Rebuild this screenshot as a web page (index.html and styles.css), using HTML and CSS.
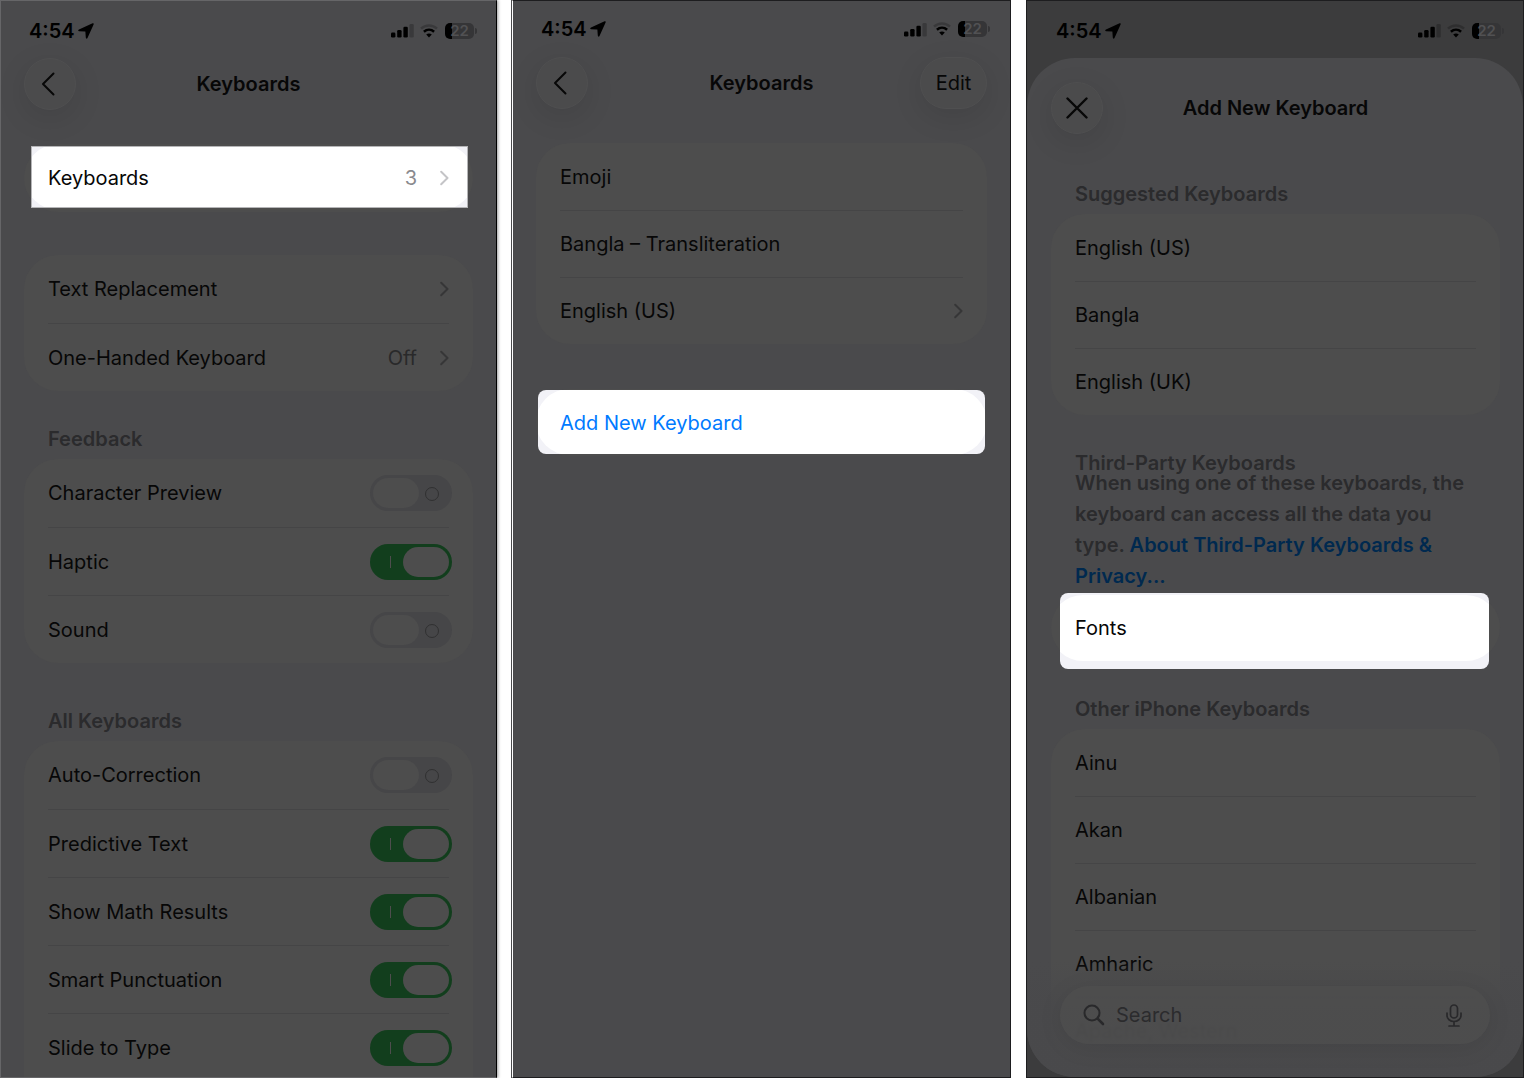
FILE: index.html
```html
<!DOCTYPE html>
<html lang="en">
<head>
  <meta charset="UTF-8" />
  <meta name="viewport" content="width=device-width, initial-scale=1" />
  <title>Keyboards</title>
  <link rel="stylesheet" href="styles.css">
</head>
<body>
  <!-- Shared icons -->
  <svg class="sprite" aria-hidden="true">
    <symbol id="arrow" viewBox="0 0 16 16">
      <path d="M14.600.3 1 6.500C-.2 7.100 0 8.100 1.200 8.200L7 8.600c.3 0 .4.1.4.4l.4 5.600c.1 1.300 1.200 1.400 1.700.3L15.600 1.400C16 .4 15.500-.1 14.600.3z" fill="currentColor"/>
    </symbol>
    <symbol id="signal" viewBox="0 0 23 15">
      <rect x="0" y="9.500" width="4.400" height="5" rx="1.300"/>
      <rect x="6.200" y="7" width="4.400" height="7.500" rx="1.300"/>
      <rect x="12.400" y="3.800" width="4.400" height="10.700" rx="1.300"/>
      <rect x="18.400" y="1" width="4.400" height="13.500" rx="1.300" fill-opacity=".22"/>
    </symbol>
    <symbol id="wifi" viewBox="0 0 18 14">
      <path d="M1 4.600C5.500.4 12.500.4 17 4.600" fill="none" stroke="currentColor" stroke-width="2.600" stroke-opacity=".22"/>
      <path d="M3.900 7.700C6.900 5 11.100 5 14.100 7.700" fill="none" stroke="currentColor" stroke-width="2.500"/>
      <path d="M6.200 10.500C7.900 9 10.100 9 11.800 10.500L9 13.400z" fill="currentColor"/>
    </symbol>
    <symbol id="back" viewBox="0 0 14 24">
      <path d="M12.500 1.500 2 12l10.500 10.500" fill="none" stroke="currentColor" stroke-width="2" stroke-linecap="round" stroke-linejoin="round"/>
    </symbol>
    <symbol id="chevron" viewBox="0 0 9 16">
      <path d="M1.200 1.800 7.500 8 1.200 14.200" fill="none" stroke="currentColor" stroke-width="2" stroke-linecap="round" stroke-linejoin="round"/>
    </symbol>
  </svg>

  <main class="screens">
    <!-- Keyboard settings -->
    <section class="phone phone-settings">
      <div class="status">
        <span class="time">4:54</span>
        <svg class="arrow"><use href="#arrow"/></svg>
        <svg class="signal"><use href="#signal"/></svg>
        <svg class="wifi"><use href="#wifi"/></svg>
        <span class="battery">22</span>
      </div>
      <header class="nav">
        <button class="round-btn" aria-label="Back"><svg class="back"><use href="#back"/></svg></button>
        <h1>Keyboards</h1>
      </header>

      <ul class="card first">
        <li class="spot spot-line">
          <a href="#">Keyboards <span class="value">3</span><svg class="chevron"><use href="#chevron"/></svg></a>
        </li>
      </ul>

      <ul class="card">
        <li><a href="#">Text Replacement <svg class="chevron"><use href="#chevron"/></svg></a></li>
        <li><a href="#">One-Handed Keyboard <span class="value">Off</span><svg class="chevron"><use href="#chevron"/></svg></a></li>
      </ul>

      <h2>Feedback</h2>
      <ul class="card">
        <li><label>Character Preview <input type="checkbox" class="toggle"></label></li>
        <li><label>Haptic <input type="checkbox" class="toggle" checked></label></li>
        <li><label>Sound <input type="checkbox" class="toggle"></label></li>
      </ul>

      <h2 class="far">All Keyboards</h2>
      <ul class="card">
        <li><label>Auto-Correction <input type="checkbox" class="toggle"></label></li>
        <li><label>Predictive Text <input type="checkbox" class="toggle" checked></label></li>
        <li><label>Show Math Results <input type="checkbox" class="toggle" checked></label></li>
        <li><label>Smart Punctuation <input type="checkbox" class="toggle" checked></label></li>
        <li class="last"><label>Slide to Type <input type="checkbox" class="toggle" checked></label></li>
      </ul>
    </section>

    <!-- Installed keyboards -->
    <section class="phone phone-list">
      <div class="status">
        <span class="time">4:54</span>
        <svg class="arrow"><use href="#arrow"/></svg>
        <svg class="signal"><use href="#signal"/></svg>
        <svg class="wifi"><use href="#wifi"/></svg>
        <span class="battery">22</span>
      </div>
      <header class="nav">
        <button class="round-btn" aria-label="Back"><svg class="back"><use href="#back"/></svg></button>
        <h1>Keyboards</h1>
        <button class="round-btn edit-btn">Edit</button>
      </header>

      <ul class="card first">
        <li>Emoji</li>
        <li>Bangla – Transliteration</li>
        <li><a href="#">English (US) <svg class="chevron"><use href="#chevron"/></svg></a></li>
      </ul>

      <ul class="card">
        <li class="spot spot-add"><button>Add New Keyboard</button></li>
      </ul>
    </section>

    <!-- Add new keyboard sheet -->
    <section class="phone phone-add">
      <div class="status">
        <span class="time">4:54</span>
        <svg class="arrow"><use href="#arrow"/></svg>
        <svg class="signal"><use href="#signal"/></svg>
        <svg class="wifi"><use href="#wifi"/></svg>
        <span class="battery">22</span>
      </div>
      <div class="sheet">
        <header class="nav">
          <button class="round-btn" aria-label="Close">
            <svg class="close" viewBox="0 0 22 22"><path d="M1.500 1.500l19 19M20.500 1.500l-19 19" fill="none" stroke="currentColor" stroke-width="2.400" stroke-linecap="round"/></svg>
          </button>
          <h1>Add New Keyboard</h1>
        </header>

        <h2 class="far">Suggested Keyboards</h2>
        <ul class="card">
          <li><button>English (US)</button></li>
          <li><button>Bangla</button></li>
          <li><button>English (UK)</button></li>
        </ul>

        <h2 class="tight">Third-Party Keyboards</h2>
        <p class="note">When using one of these keyboards, the keyboard can access all the data you type. <a href="#">About Third-Party Keyboards &amp; Privacy...</a></p>
        <ul class="card">
          <li class="spot spot-fonts"><button>Fonts</button></li>
        </ul>

        <h2>Other iPhone Keyboards</h2>
        <ul class="card">
          <li><button>Ainu</button></li>
          <li><button>Akan</button></li>
          <li><button>Albanian</button></li>
          <li><button>Amharic</button></li>
          <li class="under"><button>Apache, Western</button></li>
        </ul>

        <div class="fade">
          <label class="search">
            <svg class="glass" viewBox="0 0 22 22"><circle cx="9" cy="9" r="7.500" fill="none" stroke="currentColor" stroke-width="2"/><path d="M14.600 14.600l5.400 5.400" stroke="currentColor" stroke-width="2.600" stroke-linecap="round"/></svg>
            <input type="text" placeholder="Search" aria-label="Search">
            <svg class="mic" viewBox="0 0 16 23"><rect x="4.500" y="1" width="7" height="13" rx="3.500" fill="none" stroke="currentColor" stroke-width="1.700"/><path d="M1 9v2.500a7 6 0 0 0 14 0V9M8 17.500V22M3 22h10" fill="none" stroke="currentColor" stroke-width="1.700" stroke-linecap="round"/></svg>
          </label>
        </div>
      </div>
    </section>
  </main>
</body>
</html>
```

FILE: styles.css
```css
* {
  box-sizing: border-box;
}
body {
  font-family: Inter, "Liberation Sans", sans-serif;
  font-size: 20px;
  line-height: 24px;
  color: #070707;
  background: white;
  margin: 0;
}
h1, h2, p, ul {
  margin: 0;
  padding: 0;
}
a {
  color: inherit;
  text-decoration: none;
}
button, input {
  font: inherit;
  color: inherit;
  background: none;
  border: none;
  padding: 0;
  cursor: pointer;
}
svg {
  flex: none;
}
.sprite {
  display: none;
}
.screens {
  display: grid;
  grid-template-columns: 497fr 499fr 498fr;
  gap: 15px;
  height: 100vh;
}
.phone {
  background: #4a4a4c;
  border: 1px solid #1d1d1f;
  padding: 0 23px;
  min-width: 0;
  overflow: hidden;
}
.phone-settings {
  border-color: #666668 black #666668 #666668;
  box-shadow: 1px 0 3px rgba(0, 0, 0, 0.4);
}
.phone-list {
  border-left-color: white;
  box-shadow: -1px 0 0 #4a4a4c;
}
.phone-add {
  background: #3c3c3d;
  padding: 0;
}

/* Status bar */
.status {
  display: flex;
  align-items: center;
  height: 57px;
  padding: 2px 0 0 5px;
  color: black;
}
.phone-settings .status {
  margin-right: -1px;
}
.phone-list .status {
  height: 56px;
  padding-bottom: 2px;
}
.phone-add .status {
  padding-left: 29px;
  padding-right: 22px;
}
.time {
  font-weight: 600;
}
.arrow {
  width: 16px;
  height: 16px;
  margin-left: 3px;
}
.signal {
  width: 23px;
  height: 15px;
  margin-left: auto;
}
.wifi {
  width: 18px;
  height: 14px;
  margin: 0 7px 0 6px;
}
.battery {
  position: relative;
  width: 29px;
  height: 16px;
  border-radius: 5px;
  background: linear-gradient(to right, black 7px, #353537 7px);
  color: #515153;
  font-size: 15px;
  font-weight: 600;
  line-height: 16px;
  text-align: center;
}
.battery::after {
  content: "";
  position: absolute;
  right: -3px;
  top: 5px;
  width: 2px;
  height: 6px;
  border-radius: 0 2px 2px 0;
  background: #353537;
}

/* Navigation */
.nav {
  display: grid;
  grid-template-columns: 1fr auto 1fr;
  align-items: center;
}
h1 {
  grid-column: 2;
  font-size: 20px;
  font-weight: 600;
}
.round-btn {
  display: flex;
  align-items: center;
  justify-content: center;
  width: 52px;
  height: 52px;
  border-radius: 26px;
  background: #4b4b4c;
  border: 1px solid #4f4f50;
  box-shadow: 0 8px 30px rgba(0, 0, 0, 0.1);
}
.edit-btn {
  justify-self: end;
  width: 67px;
}
.back {
  width: 14px;
  height: 24px;
  margin-right: 4px;
}
.close {
  width: 22px;
  height: 22px;
}

/* Grouped lists */
h2 {
  font-size: 20px;
  font-weight: 600;
  color: #2b2b2d;
  margin: 36px 24px 8px;
}
h2.far {
  margin-top: 46px;
}
.sheet h2.far {
  margin-top: 48px;
}
h2.tight {
  margin-top: 36px;
  margin-bottom: -7px;
}
.card {
  display: flex;
  flex-direction: column;
  list-style: none;
  background: #4d4d4d;
  border-radius: 34px;
}
.card + .card {
  margin-top: 43px;
}
.phone-list .card + .card {
  margin-top: 45px;
}
.card.first {
  margin-top: 34px;
}
.card li {
  display: flex;
  align-items: center;
  height: 67px;
  margin: 0 24px;
}
.phone-settings .card li {
  height: 68px;
}
.phone-settings .card .last {
  margin-bottom: 34px;
}
.card li + li {
  border-top: 1px solid #454546;
}
.card li > * {
  flex: 1;
  display: flex;
  align-items: center;
  text-align: left;
}
.value {
  margin-left: auto;
  color: #29292a;
}
.chevron {
  width: 9px;
  height: 16px;
  margin-left: auto;
  color: #363637;
}
.value + .chevron {
  margin-left: 23px;
}

/* Highlighted rows */
.card .spot {
  position: relative;
  overflow: hidden;
  background: #f2f2f7;
}
.spot::before {
  content: "";
  position: absolute;
  background: white;
  border-radius: 34px;
}
.spot > * {
  position: relative;
}
.spot .value {
  color: #8a8a8e;
}
.spot .chevron {
  color: #c4c4c7;
}
.phone-settings .card .spot-line {
  height: 62px;
  margin: 2px 5px 4px 7px;
  padding: 2px 18px 0 16px;
  border: 1px solid #b5b5b7;
}
.spot-line::before {
  inset: -3px -7px;
}
.card .spot-add {
  height: 64px;
  margin: 1px 2px 2px;
  padding: 2px 22px 0;
  border-radius: 8px;
  color: #007aff;
}
.spot-add::before {
  inset: -1px -2px;
}
.card .spot-fonts {
  height: 76px;
  margin: -1px 11px -8px 9px;
  padding: 0 15px 6px;
  border-radius: 8px;
}
.spot-fonts::before {
  inset: 2px -10px 8px;
}

/* Switches */
.toggle {
  appearance: none;
  position: relative;
  width: 82px;
  height: 36px;
  margin: 0 -3px 0 auto;
  border-radius: 18px;
  background: #464648;
}
.toggle::before {
  content: "";
  position: absolute;
  left: 3px;
  top: 3px;
  width: 46px;
  height: 30px;
  border-radius: 15px;
  background: #4d4d4d;
}
.toggle::after {
  content: "";
  position: absolute;
  left: 55px;
  top: 12px;
  width: 12px;
  height: 12px;
  border: 1px solid #303031;
  border-radius: 50%;
}
.toggle:checked {
  background: #123e1d;
}
.toggle:checked::before {
  left: 33px;
}
.toggle:checked::after {
  left: 20px;
  width: 1px;
  border: none;
  border-radius: 0;
  background: #4d4d4d;
}

/* Add keyboard sheet */
.sheet {
  position: relative;
  height: calc(100vh - 59px);
  padding: 24px 23px 0 24px;
  border-radius: 48px;
  background: #4a4a4c;
  overflow: hidden;
}
.note {
  margin: 0 24px 2px;
  line-height: 31px;
  font-weight: 600;
  color: #2b2b2d;
}
.note a {
  color: #00294f;
}
.under {
  filter: blur(1px);
}
.fade {
  position: absolute;
  left: 0;
  right: 0;
  bottom: 0;
  padding: 40px 33px 33px;
  background: linear-gradient(to bottom, rgba(73, 73, 75, 0) 15px, rgba(73, 73, 75, 0.85) 65px);
}
.search {
  display: flex;
  align-items: center;
  height: 58px;
  padding: 0 28px 0 23px;
  border-radius: 29px;
  background: rgba(79, 79, 79, 0.7);
  box-shadow: 0 4px 24px rgba(0, 0, 0, 0.08);
  color: #29292b;
}
.search input {
  flex: 1;
  min-width: 0;
  margin-left: 11px;
  outline: none;
}
.search input::placeholder {
  color: #2b2b2d;
  opacity: 1;
}
.glass {
  width: 22px;
  height: 22px;
}
.mic {
  width: 16px;
  height: 23px;
}
```
